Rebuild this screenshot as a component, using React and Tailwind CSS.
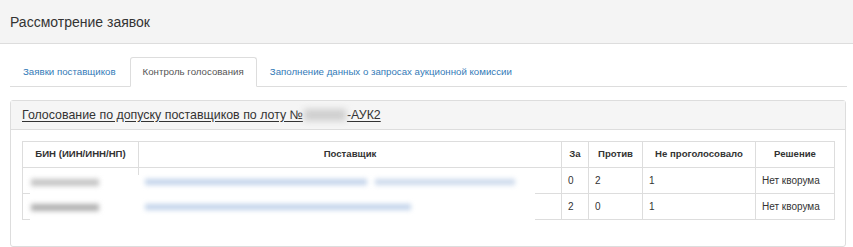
import React from "react";

const rows = [
  { za: "0", protiv: "2", ne: "1", res: "Нет кворума" },
  { za: "2", protiv: "0", ne: "1", res: "Нет кворума" },
];

const tabs = ["Заявки поставщиков", "Контроль голосования", "Заполнение данных о запросах аукционной комиссии"];

const App = () => {
  return (
    <div className="w-[853px] h-[247px] bg-white text-[#333] font-['Liberation_Sans',Arial,sans-serif] overflow-hidden">
      <div className="h-[44px] bg-[#f4f4f4] border-b border-[#dddddd] pl-[10px] pt-[13px]">
        <h1 className="text-[14px] leading-[18px] text-[#333]">Рассмотрение заявок</h1>
      </div>

      <div className="mt-[13px] flex border-b border-[#dddddd] ml-[10px] mr-[6px]">
        {tabs.map((t, i) => (
          <div
            key={t}
            className={
              i === 1
                ? "h-[30px] -mb-px px-[12px] flex items-center text-[9.7px] text-[#555] bg-white border border-[#dddddd] border-b-white rounded-t-[3px] ml-px"
                : "h-[30px] -mb-px px-[12px] flex items-center text-[9.7px] text-[#337ab7] border border-transparent"
            }
          >
            {t}
          </div>
        ))}
      </div>

      <div className="mx-[10px] mt-[13px] mr-[7px] border border-[#dddddd] rounded-[3px] h-[147px]">
        <div className="h-[29px] bg-[#f5f5f5] border-b border-[#dddddd] pl-[11px] flex items-center">
          <span className="text-[12.4px] text-[#333] underline underline-offset-2 flex items-center">
            Голосование по допуску поставщиков по лоту №
            <span className="inline-block w-[42px] h-[12px] bg-[#cfcfcf] blur-[3px] mx-[1px]"></span>
            -АУК2
          </span>
        </div>
        <div className="pl-[11px] pr-[11px] pt-[11px]">
          <div className="relative">
            <table className="w-[813px] border-collapse text-[10px] text-[#333] table-fixed">
              <colgroup>
                <col className="w-[116px]" />
                <col className="w-[423px]" />
                <col className="w-[27px]" />
                <col className="w-[54px]" />
                <col className="w-[113px]" />
                <col className="w-[79px]" />
              </colgroup>
              <thead>
                <tr className="h-[26px]">
                  {["БИН (ИИН/ИНН/НП)", "Поставщик", "За", "Против", "Не проголосовало", "Решение"].map((h) => (
                    <th key={h} className="border border-[#dddddd] font-bold text-[9.6px] text-center px-[4px] whitespace-nowrap">
                      {h}
                    </th>
                  ))}
                </tr>
              </thead>
              <tbody>
                {rows.map((r, i) => (
                  <tr key={i} className="h-[26px]">
                    <td className="border border-[#dddddd] px-[6px]"></td>
                    <td className="border border-[#dddddd] px-[6px]"></td>
                    <td className="border border-[#dddddd] px-[6px]">{r.za}</td>
                    <td className="border border-[#dddddd] px-[6px]">{r.protiv}</td>
                    <td className="border border-[#dddddd] px-[6px]">{r.ne}</td>
                    <td className="border border-[#dddddd] px-[6px] whitespace-nowrap">{r.res}</td>
                  </tr>
                ))}
              </tbody>
            </table>

            {/* blurred overlay hiding personal data */}
            <div className="absolute left-[8px] top-[34px] w-[505px] h-[45px] bg-white flex flex-col gap-[17px] pt-[3px]">
              <div className="flex items-center h-[8px]">
                <div className="ml-[1px] w-[68px] h-[7px] bg-[#c4c4c4] blur-[2.5px]"></div>
                <div className="ml-[46px] w-[222px] h-[6px] bg-[#c2d3ea] blur-[2.5px]"></div>
                <div className="ml-[8px] w-[140px] h-[6px] bg-[#cbd9ec] blur-[2.5px]"></div>
              </div>
              <div className="flex items-center h-[8px]">
                <div className="ml-[1px] w-[68px] h-[7px] bg-[#b0b0b0] blur-[2.5px]"></div>
                <div className="ml-[46px] w-[266px] h-[6px] bg-[#c2d3ea] blur-[2.5px]"></div>
              </div>
            </div>
          </div>
        </div>
      </div>
    </div>
  );
};

export default App;
